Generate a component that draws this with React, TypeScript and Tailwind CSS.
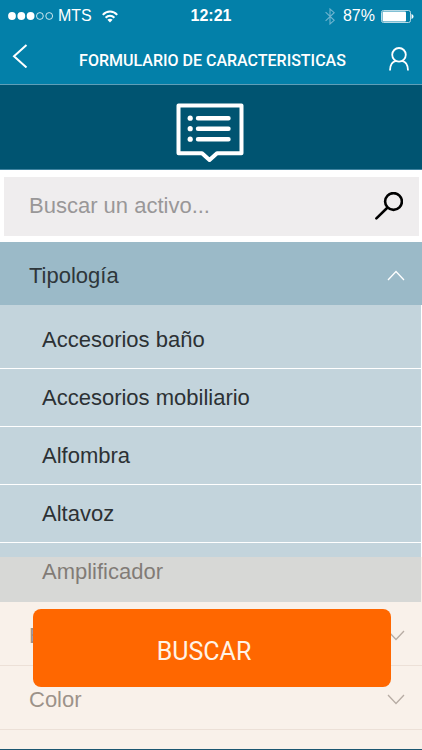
import { useState } from "react";

const items = ["Accesorios baño", "Accesorios mobiliario", "Alfombra", "Altavoz", "Amplificador"];

function Chevron({ up, className }: any) {
  return (
    <svg width="18" height="11" viewBox="0 0 18 11" fill="none" stroke="currentColor" strokeWidth="1.3" className={className}>
      <path d={up ? "M1 10L9 1.5L17 10" : "M1 1L9 9.5L17 1"} />
    </svg>
  );
}

function StatusBar() {
  return (
    <div className="grid h-8 grid-cols-[1fr_auto_1fr] items-center pl-2 pr-2 text-[16px] leading-5 text-white">
      <div className="flex items-center gap-1">
        <svg width="46" height="10" viewBox="0 0 46 10" fill="white">
          <circle cx="4" cy="5" r="3.9" />
          <circle cx="13.3" cy="5" r="3.9" />
          <circle cx="22.6" cy="5" r="3.9" />
          <circle cx="31.9" cy="5" r="3.4" fill="none" stroke="white" strokeWidth="0.8" />
          <circle cx="41.2" cy="5" r="3.4" fill="none" stroke="white" strokeWidth="0.8" />
        </svg>
        <span>MTS</span>
        <svg width="16" height="13" viewBox="0 0 16 13" fill="none" stroke="white" strokeWidth="2" className="ml-1.5">
          <path d="M0.8 4.8C4.8 0.4 11.2 0.4 15.2 4.8" />
          <path d="M3.6 7.8C6.2 5 9.8 5 12.4 7.8" />
          <path d="M8 12.6L5.4 9.8C6.8 8.4 9.2 8.4 10.6 9.8Z" fill="white" stroke="none" />
        </svg>
      </div>
      <span className="font-bold">12:21</span>
      <div className="flex items-center justify-end gap-1">
        <svg width="10" height="17" viewBox="0 0 10 17" fill="none" stroke="#6fb4cf" strokeWidth="1.1" className="mr-1">
          <path d="M0.6 4.2L9.2 12.3L5 16V1L9.2 4.7L0.6 12.8" />
        </svg>
        <span>87%</span>
        <svg width="33" height="13" viewBox="0 0 33 13" className="ml-0.5">
          <rect x="0.5" y="0.5" width="29" height="12" rx="2" fill="none" stroke="#b9dbe7" />
          <rect x="1.5" y="1.5" width="23.5" height="10" rx="1" fill="white" />
          <path d="M30.5 4C33.2 5 33.2 8 30.5 9Z" fill="white" />
        </svg>
      </div>
    </div>
  );
}

function Section({ title, open, onToggle }: any) {
  return (
    <button
      type="button"
      onClick={onToggle}
      aria-expanded={open}
      className={
        open
          ? "flex h-[63px] w-full items-center justify-between bg-[#9bbac8] pl-[29px] pr-[17px] pt-1 text-left text-[#2e363a]"
          : "flex h-16 w-full items-center justify-between border-b border-[#e9e2dd] bg-white pl-[29px] pr-[17px] pt-1 text-left text-[#5c5855]"
      }
    >
      <span className="text-[22px] leading-7">{title}</span>
      <Chevron up={open} className={open ? "text-white" : "text-[#8c8785]"} />
    </button>
  );
}

export default function App() {
  const [open, setOpen] = useState(true);

  return (
    <div className="flex h-screen flex-col overflow-hidden border-b border-[#1b5670] bg-white font-['Liberation_Sans',Arial,sans-serif]">
      <header className="shrink-0 border-b border-[#5f9fb8] bg-[#0380a9]">
        <StatusBar />
        <div className="flex h-[52px] items-center justify-between pl-3 pr-[13px] text-white">
          <button type="button" aria-label="Volver" className="w-6 pb-1">
            <svg width="16" height="24" viewBox="0 0 16 24" fill="none" stroke="white" strokeWidth="2">
              <path d="M14.5 1L2 12.3L14.5 23.5" />
            </svg>
          </button>
          <h1 className="pt-1.5 font-[Roboto,sans-serif] text-[16px] font-medium leading-5">FORMULARIO DE CARACTERISTICAS</h1>
          <button type="button" aria-label="Perfil" className="pt-0.5">
            <svg width="20" height="24" viewBox="0 0 20 24" fill="none" stroke="white" strokeWidth="1.8">
              <circle cx="10" cy="7.8" r="6.8" />
              <path d="M1 23.5C1 17.5 3.6 14.6 7 13.9M19 23.5C19 17.5 16.4 14.6 13 13.9" />
            </svg>
          </button>
        </div>
      </header>

      <div className="flex h-[85px] shrink-0 justify-center border-b border-[#3f83a0] bg-[#005471] pr-[3px] pt-[18px]">
        <svg width="68" height="60" viewBox="0 0 68 60" fill="none" stroke="white">
          <path d="M2.5 2.5H65.5V50.2H41L33.5 57L26 50.2H2.5Z" strokeWidth="4" strokeLinejoin="round" />
          <path d="M22 15.2H52.5M22 25.7H52.5M22 36.2H52.5" strokeWidth="4.4" strokeLinecap="round" />
          <g fill="white" stroke="none">
            <circle cx="14.2" cy="15.2" r="2.6" />
            <circle cx="14.2" cy="25.7" r="2.6" />
            <circle cx="14.2" cy="36.2" r="2.6" />
          </g>
        </svg>
      </div>

      <form className="shrink-0 pb-[6px] pl-1 pr-[3px] pt-[7px]" onSubmit={(e) => e.preventDefault()}>
        <div className="flex h-[59px] items-center bg-[#efedee] pb-0.5 pl-[25px] pr-4">
          <input
            type="text"
            aria-label="Buscar un activo"
            placeholder="Buscar un activo..."
            className="min-w-0 flex-1 bg-transparent text-[22px] leading-7 outline-none placeholder:text-[#999798]"
          />
          <button type="submit" aria-label="Buscar activo">
            <svg width="28" height="28" viewBox="0 0 28 28" fill="none" stroke="black" strokeWidth="2.6">
              <circle cx="18.5" cy="9.5" r="8.4" />
              <path d="M12.3 15.7L1.4 26.4" strokeLinecap="round" />
            </svg>
          </button>
        </div>
      </form>

      <main className="min-h-0 flex-1 overflow-hidden">
        <Section title="Tipología" open={open} onToggle={() => setOpen(!open)} />
        {open && (
          <ul className="mr-px bg-[#c3d4dc] pb-px pt-[6px]">
            {items.map((item) => (
              <li
                key={item}
                className="flex h-[58px] items-center border-b border-white pl-[42px] pt-px text-[22px] leading-7 text-[#2c3134] last:border-transparent"
              >
                {item}
              </li>
            ))}
          </ul>
        )}
        <Section title="Estado" open={false} />
        <Section title="Color" open={false} />
      </main>

      <div className="fixed inset-x-0 bottom-px h-48 bg-[#f1decf]/43 pl-[33px] pr-[31px] pt-[52px]">
        <button
          type="button"
          className="h-[78px] w-full rounded-lg bg-[#ff6700] pr-4 pt-2 font-[Roboto,sans-serif] text-[25px] leading-8 text-[#fff3e6]"
        >
          BUSCAR
        </button>
      </div>
    </div>
  );
}
